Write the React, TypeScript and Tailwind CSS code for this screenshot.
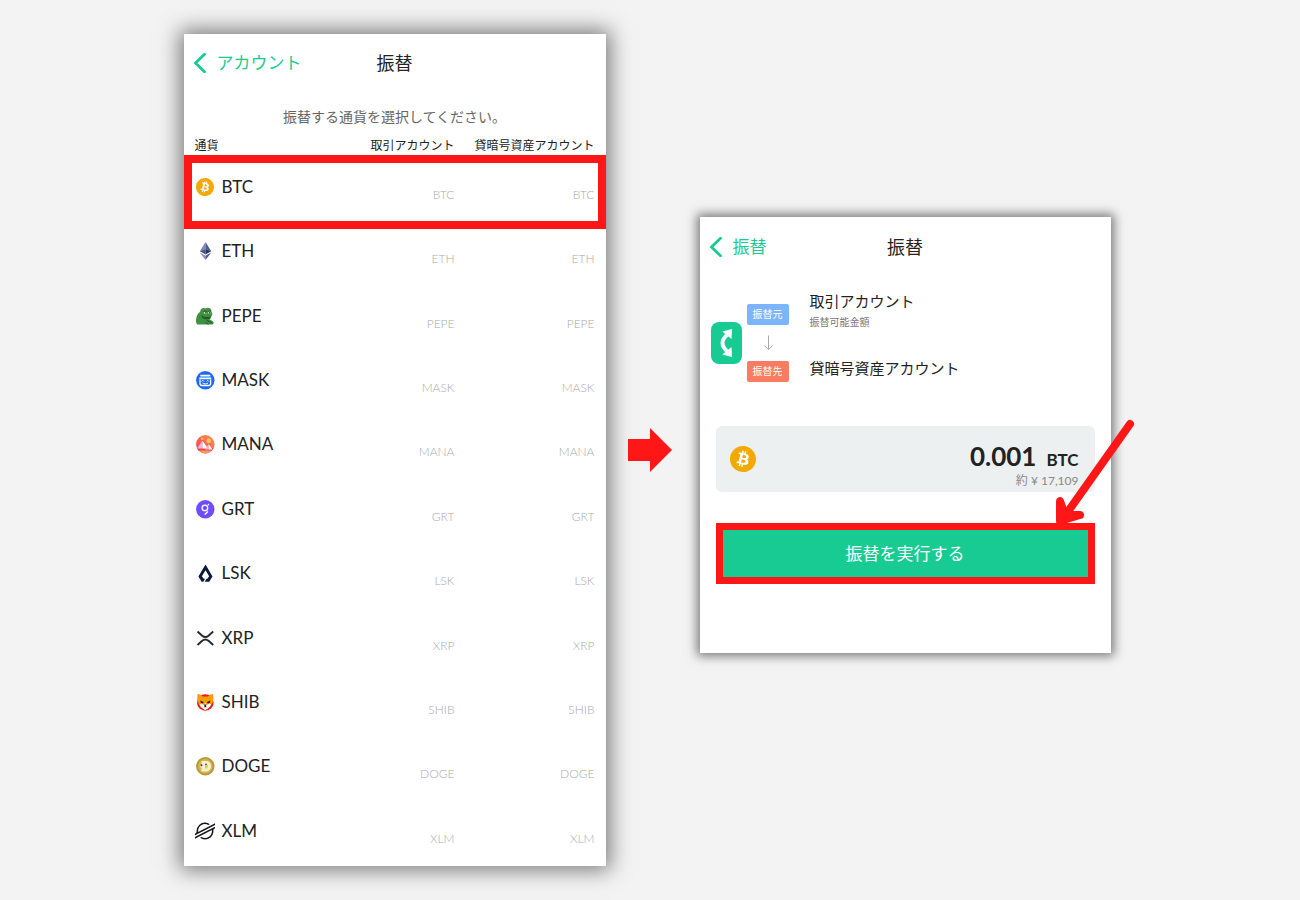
import type { ReactNode } from "react";
import { SiBitcoin, SiStellar } from "react-icons/si";

const iconClass = "size-5 shrink-0";

function BitcoinIcon({ className }: { className: string }) {
  return (
    <span className={`flex shrink-0 items-center justify-center rounded-full bg-[radial-gradient(circle,white_60%,transparent_62%)] ${className}`}>
      <SiBitcoin aria-hidden="true" className="size-full text-[#f2a900]" />
    </span>
  );
}

function EthIcon() {
  return (
    <svg viewBox="0 0 20 20" className={iconClass} aria-hidden="true">
      <path d="M10.500 1 4.800 10.200 10.500 7.800z" fill="#7c89b8" />
      <path d="M10.500 1v6.800l5.700 2.400z" fill="#4c5a94" />
      <path d="M4.800 10.200 10.500 13.400V7.800z" fill="#4b578c" />
      <path d="M16.200 10.200 10.500 13.400V7.800z" fill="#2b3564" />
      <path d="M4.800 11.600 10.500 19v-4.200z" fill="#8590bd" />
      <path d="M16.200 11.600 10.500 19v-4.200z" fill="#4c5a94" />
    </svg>
  );
}

function PepeIcon() {
  return (
    <svg viewBox="0 0 20 20" className={iconClass} aria-hidden="true">
      <path d="M5.200 5.800C5 2.600 8.400.9 10.700 2.600 13 .8 16.800 2.300 16.500 5.700c1 1.400 1 3.700-.3 5-.2 1.300-1 2.200-1.700 2.600l3.600 2.200c.9.800.6 2.700-.5 3.100H2.200C.9 17.400.7 14.500 1.300 12.300 1.700 9.500 3 7 5.200 5.800z" fill="#3d9140" />
      <path d="M8.300 5.600c1.300-.8 2.600-.7 3.700.1M12.800 5.600c1.100-.8 2.200-.7 3.200 0" fill="none" stroke="#1c5323" strokeWidth=".8" />
      <ellipse cx="10.400" cy="6.800" rx="1.800" ry=".9" fill="#e8f3e4" />
      <ellipse cx="14.500" cy="6.700" rx="1.500" ry=".9" fill="#e8f3e4" />
      <circle cx="10.900" cy="6.800" r=".8" fill="#142817" />
      <circle cx="14.800" cy="6.700" r=".8" fill="#142817" />
      <path d="M6.500 9.600c2.600 2.300 6 2.500 9 1.300M7 11.300c2.500 1.700 5.600 1.800 8 .7" fill="none" stroke="#20512a" strokeWidth="1" />
      <path d="M11.500 14.200c1.500 1.300 3.600 1.500 5.500 2.600M10.800 16.500l2.800 2" fill="none" stroke="#1c5323" strokeWidth=".9" />
    </svg>
  );
}

function MaskIcon() {
  return (
    <svg viewBox="0 0 20 20" className={iconClass} aria-hidden="true">
      <circle cx="10.300" cy="10.300" r="9.200" fill="#1c68f3" />
      <path d="M5.300 4.800h10v1.800h-10zM4.300 7.600h12v1.600h-12z" fill="#fff" />
      <path d="M5 9.500v4a2 2 0 0 0 2 2h6.600a2 2 0 0 0 2-2v-4" fill="none" stroke="#fff" strokeWidth="1.300" />
      <path d="M6.600 11.400c.6-1 1.900-1 2.500 0M11.500 11.400c.6-1 1.900-1 2.500 0M7.500 13c1.500 1.200 4.100 1.200 5.600 0" fill="none" stroke="#fff" strokeWidth="1" />
    </svg>
  );
}

function ManaIcon() {
  return (
    <svg viewBox="0 0 20 20" className={iconClass} aria-hidden="true">
      <defs>
        <linearGradient id="mana-sky" x1="0" y1="1" x2="1" y2="0">
          <stop offset="0" stopColor="#ff2d55" />
          <stop offset="1" stopColor="#ff9a50" />
        </linearGradient>
        <clipPath id="mana-clip">
          <circle cx="10.300" cy="10.300" r="9.200" />
        </clipPath>
      </defs>
      <g clipPath="url(#mana-clip)">
        <path d="M0 0h20v20H0z" fill="url(#mana-sky)" />
        <path d="M0 14.500h20V17H0z" fill="#f7423f" />
        <path d="M4.500 16.500h12V20h-12z" fill="#fc9965" />
        <path d="M7.500 6.800v7.700H2z" fill="#f0b5dc" />
        <path d="M7.500 6.800v7.700H13z" fill="#fff" />
        <path d="M13.600 10.200v5.400H10z" fill="#f0b5dc" />
        <path d="M13.600 10.200v5.400h4z" fill="#fff" />
        <circle cx="13.600" cy="6.900" r="2.300" fill="#ffc95b" />
        <circle cx="7.200" cy="4.800" r="1.200" fill="#ffc95b" />
      </g>
    </svg>
  );
}

function GraphIcon() {
  return (
    <svg viewBox="0 0 20 20" className={iconClass} aria-hidden="true">
      <circle cx="10.300" cy="10.300" r="9.200" fill="#6f4cff" />
      <circle cx="9.900" cy="8.900" r="2.800" fill="none" stroke="#fff" strokeWidth="1.300" />
      <path d="m12.600 12.800-2.500 2.500" stroke="#fff" strokeWidth="1.300" strokeLinecap="round" />
      <circle cx="13.400" cy="5.600" r=".8" fill="#fff" />
    </svg>
  );
}

function LiskIcon() {
  return (
    <svg viewBox="0 0 20 20" className={iconClass} aria-hidden="true">
      <path
        fillRule="evenodd"
        d="m10.500 1.400 7 12.100-3.300 5.300H6.700l-3.300-5.300zm0 5.800L6.900 13.300l1.800 2.500h3.600l1.800-2.500z"
        fill="#0c1a35"
      />
      <path d="m11.200 15-2.400 4.200" stroke="#fff" strokeWidth="1.200" />
    </svg>
  );
}

function XrpIcon() {
  return (
    <svg viewBox="0 0 20 20" className={iconClass} aria-hidden="true">
      <path d="M2.500 3.500 7.200 7.700c1.900 1.600 4.400 1.600 6.300 0l4.700-4.200M2.500 17l4.700-4.200c1.900-1.600 4.400-1.600 6.300 0l4.700 4.200" fill="none" stroke="#23292f" strokeWidth="1.900" />
    </svg>
  );
}

function ShibIcon() {
  return (
    <svg viewBox="0 0 20 20" className={iconClass} aria-hidden="true">
      <circle cx="10.300" cy="10.500" r="8.300" fill="#f01b12" />
      <path d="M2.600 2c2.200.2 3.700 1.200 5 2.400H13c1.300-1.200 2.800-2.200 5-2.400.6 3.300.5 6.300-.5 8.600L14.800 15l-4.500 3-4.500-3-2.700-4.400c-1-2.300-1.100-5.300-.5-8.600z" fill="#ff9b0b" />
      <path d="M4.500 12.300c1.600-.5 3-.2 4.200.7l1.600-2.200 1.600 2.200c1.200-.9 2.600-1.200 4.200-.7-.8 2.300-2.600 4.300-5.800 5.700-3.200-1.400-5-3.400-5.800-5.700z" fill="#fff" />
      <path d="m5.300 8.600 3.300 1.500-.5 1.500-2.400-.8zM15.300 8.600 12 10.100l.5 1.500 2.400-.8zM8.900 12.500h2.800l-.7 1.500.5 1.200H9.100l.5-1.200z" fill="#251c18" />
    </svg>
  );
}

function DogeIcon() {
  return (
    <svg viewBox="0 0 20 20" className={iconClass} aria-hidden="true">
      <circle cx="10.300" cy="10.300" r="9.200" fill="#b99a35" />
      <circle cx="10.300" cy="10.300" r="7.200" fill="#d2b857" />
      <path d="M6.500 5h4.300c3.200 0 5.200 2 5.200 5.200s-2 5.300-5.200 5.300H6.500v-4.200H5.200V9.200h1.300z" fill="#f6efd0" />
      <path d="M10 8h.8c1.300 0 2.100.8 2.100 2.200s-.8 2.300-2.100 2.300H10z" fill="#dccb86" />
      <circle cx="6.500" cy="9.300" r="1" fill="#4c4020" />
      <circle cx="11" cy="8.400" r=".8" fill="#4c4020" />
    </svg>
  );
}

type Coin = { symbol: string; icon: ReactNode };

const coins: Coin[] = [
  { symbol: "BTC", icon: <BitcoinIcon className="mx-px size-[18px]" /> },
  { symbol: "ETH", icon: <EthIcon /> },
  { symbol: "PEPE", icon: <PepeIcon /> },
  { symbol: "MASK", icon: <MaskIcon /> },
  { symbol: "MANA", icon: <ManaIcon /> },
  { symbol: "GRT", icon: <GraphIcon /> },
  { symbol: "LSK", icon: <LiskIcon /> },
  { symbol: "XRP", icon: <XrpIcon /> },
  { symbol: "SHIB", icon: <ShibIcon /> },
  { symbol: "DOGE", icon: <DogeIcon /> },
  { symbol: "XLM", icon: <SiStellar aria-hidden="true" className="size-5 shrink-0 stroke-0 text-[#161616]" /> },
];

function PanelHeader({ back, title }: { back: string; title: string }) {
  return (
    <header className="grid h-[58px] grid-cols-[1fr_auto_1fr] items-center px-[9px]">
      <a href="#" className="flex items-center gap-2.5 text-[17px] leading-6 text-[#18cb93]">
        <svg viewBox="0 0 14 20" className="h-5 w-3.5" aria-hidden="true">
          <path d="M11.500 1.300 2.500 10l9 8.700" fill="none" stroke="currentColor" strokeWidth="2.800" strokeLinecap="round" />
        </svg>
        {back}
      </a>
      <h1 className="text-lg leading-6 text-[#222]">{title}</h1>
    </header>
  );
}

function CurrencyPanel() {
  return (
    <section className="w-full max-w-[422px] bg-white pb-0.5 shadow-[0_0_20px_4px_rgba(0,0,0,0.5)]">
      <PanelHeader back="アカウント" title="振替" />
      <p className="mt-[15px] text-center text-sm leading-5 text-[#666]">振替する通貨を選択してください。</p>
      <table className="mt-[9px] h-[728px] w-full table-fixed">
        <thead>
          <tr className="h-5 text-xs leading-5 text-[#222]">
            <th scope="col" className="pl-[11px] text-left font-normal">通貨</th>
            <th scope="col" className="text-right font-normal">取引アカウント</th>
            <th scope="col" className="w-[151px] pr-[11px] text-right font-normal">貸暗号資産アカウント</th>
          </tr>
        </thead>
        <tbody>
          {coins.map(({ symbol, icon }, index) => (
            <tr key={symbol} className="relative align-top">
              <th scope="row" className="pt-[19px] pl-[11px] text-left font-normal">
                <button type="button" className="flex items-center gap-[7px] text-[17px] leading-6 text-[#222]">
                  {icon}
                  {symbol}
                </button>
                {index === 0 && (
                  <span className="pointer-events-none absolute inset-x-0 -top-px h-[74px] border-8 border-[#ff1616]" />
                )}
              </th>
              <td className="pt-[29px] text-right text-xs leading-5 font-light text-[#aaa]">{symbol}</td>
              <td className="pt-[29px] pr-[11px] text-right text-xs leading-5 font-light text-[#aaa]">{symbol}</td>
            </tr>
          ))}
        </tbody>
      </table>
    </section>
  );
}

function TransferPanel() {
  return (
    <section className="mb-[30px] w-full max-w-[411px] bg-white pt-px pb-[69px] shadow-[0_0_10px_3px_rgba(0,0,0,0.5)]">
      <PanelHeader back="振替" title="振替" />
      <div className="flex items-start px-[11px] pt-[15px]">
        <button type="button" aria-label="振替元と振替先を入れ替える" className="mt-[31px] flex h-[42px] w-[31px] items-center justify-center rounded-lg bg-[#18cb93] text-white">
          <svg viewBox="0 0 16 30" className="h-[30px] w-4" aria-hidden="true">
            <path d="M9.500 6.500Q-.5 15 9.500 23.500" fill="none" stroke="currentColor" strokeWidth="4" />
            <path d="M4.300 3.600 14 1l-.5 10zM4.300 26.400 14 29l-.5-10z" fill="currentColor" />
          </svg>
        </button>
        <div className="mt-[13px] ml-[5px] flex w-[42px] flex-col items-center text-[10px] leading-[21px] text-white">
          <span className="w-full rounded-xs bg-[#7db5fc] text-center">振替元</span>
          <svg viewBox="0 0 12 16" className="my-2.5 h-4 w-3" aria-hidden="true">
            <path d="M6.500 .5v14M2.500 10.700l4 4 4-4" fill="none" stroke="#aaa" strokeWidth="1" />
          </svg>
          <span className="w-full rounded-xs bg-[#f87c62] text-center">振替先</span>
        </div>
        <div className="ml-[21px] text-[15px] leading-5 text-[#222]">
          <p>取引アカウント</p>
          <p className="mt-[3px] text-[10px] leading-4 text-[#777]">振替可能金額</p>
          <p className="mt-7">貸暗号資産アカウント</p>
        </div>
      </div>
      <div className="mx-4 mt-11 flex h-[66px] items-center justify-between rounded-md bg-[#ecf0f0] pr-4 pl-3.5">
        <BitcoinIcon className="size-[26px]" />
        <div className="pt-3.5 text-right text-[#222]">
          <p className="flex items-baseline justify-end gap-2.5 leading-[26px] font-bold">
            <span className="text-[26px]">0.001</span>
            <span className="text-[17px]">BTC</span>
          </p>
          <p className="text-xs leading-4 text-[#888]">約 ¥ 17,109</p>
        </div>
      </div>
      <div className="relative mx-4 mt-[31px]">
        <button type="button" className="h-[61px] w-full border-[7px] border-[#ff1616] bg-[#18cb93] text-[17px] leading-6 text-white">
          振替を実行する
        </button>
        <svg viewBox="0 0 84 112" className="pointer-events-none absolute -top-[106px] -right-[41px] h-28 w-[84px]" aria-hidden="true">
          <path d="M78 7 10 103" fill="none" stroke="#ff1616" strokeWidth="8" strokeLinecap="round" />
          <path d="M8 84v20l20-6L13 98z" fill="#ff1616" stroke="#ff1616" strokeWidth="8" strokeLinejoin="round" />
        </svg>
      </div>
    </section>
  );
}

export default function App() {
  return (
    <main
      lang="ja"
      className="flex min-h-screen items-center justify-center bg-[#f3f3f3] py-[34px] pr-1.5 font-['Lato','Noto_Sans_CJK_JP',sans-serif]"
    >
      <CurrencyPanel />
      <svg viewBox="0 0 44 44" className="mr-7 ml-[22px] size-11 shrink-0" aria-hidden="true">
        <path d="M0 11h22V0l22 22-22 22V33H0z" fill="#ff1616" />
      </svg>
      <TransferPanel />
    </main>
  );
}
